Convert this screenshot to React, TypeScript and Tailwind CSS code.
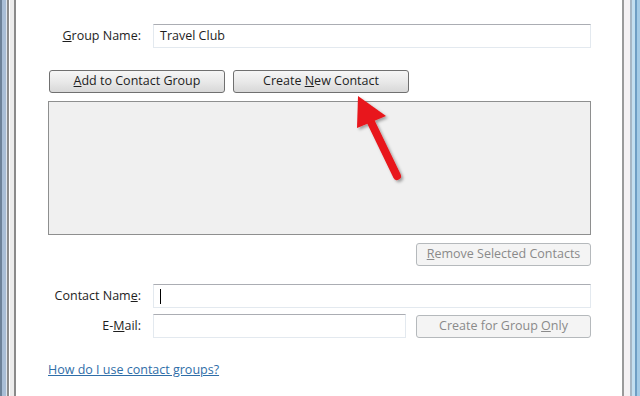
import React from 'react';

// Windows 7 style "Contact Group" dialog fragment, with a red annotation arrow.

const font = { fontFamily: '"Open Sans", "Noto Sans", sans-serif' };

function Input({ value, caret, className = '' }: { value?: string; caret?: boolean; className?: string }) {
  return (
    <div
      className={`h-[24px] flex items-center px-[6px] bg-white border border-[#e3e9ef] border-t-[#abadb3] text-[12.5px] text-[#1e1e1e] ${className}`}
    >
      {value}
      {caret && <span className="w-px h-[15px] bg-black" />}
    </div>
  );
}

function Button({ children, disabled, className = '' }: { children: React.ReactNode; disabled?: boolean; className?: string }) {
  return (
    <button
      type="button"
      className={
        disabled
          ? `h-[23px] shrink-0 flex items-center justify-center rounded-[3px] border border-[#b5b9bc] bg-[#f4f4f4] text-[12.5px] text-[#8a8a8a] ${className}`
          : `h-[23px] shrink-0 flex items-center justify-center rounded-[3px] border border-[#707070] bg-gradient-to-b from-[#f6f6f6] via-[#e9e9e9] to-[#d8d8d8] text-[12.5px] text-[#1e1e1e] ${className}`
      }
    >
      <span>{children}</span>
    </button>
  );
}

function Label({ children }: { children: React.ReactNode }) {
  return <div className="w-[94px] shrink-0 text-right text-[12.5px] text-[#1e1e1e] pr-px">{children}</div>;
}

export default function App() {
  return (
    <div className="w-[640px] h-[396px] flex overflow-hidden bg-white" style={font}>
      {/* left window frame */}
      <div className="w-[16px] flex shrink-0">
        <div className="w-[2px] bg-[#6d8299]" />
        <div className="w-[4px] bg-[#a9bed6]" />
        <div className="w-[1px] bg-[#dfe6ee]" />
        <div className="w-[2px] bg-[#8c8c8c]" />
        <div className="w-[1px] bg-white" />
        <div className="w-[4px] bg-[#ececec]" />
        <div className="w-[2px] bg-[#8a8a8a]" />
      </div>

      {/* dialog content */}
      <div className="relative w-[606px] shrink-0 flex flex-col pt-[24px] pl-[32px] pr-[31px]">
        <div className="flex items-center gap-[11px]">
          <Label>
            <span className="underline">G</span>roup Name:
          </Label>
          <Input value="Travel Club" className="flex-1" />
        </div>

        <div className="flex gap-[8px] mt-[22px] pl-px">
          <Button className="w-[176px]">
            <span className="underline">A</span>dd to Contact Group
          </Button>
          <Button className="w-[176px]">
            Create <span className="underline">N</span>ew Contact
          </Button>
        </div>

        <div className="mt-[8px] h-[134px] bg-[#f0f0f0] border border-[#8e8f8f]" />

        <div className="flex justify-end mt-[8px]">
          <Button disabled className="w-[175px]">
            <span className="underline">R</span>emove Selected Contacts
          </Button>
        </div>

        <div className="flex items-center gap-[11px] mt-[18px]">
          <Label>
            Contact Nam<span className="underline">e</span>:
          </Label>
          <Input caret className="flex-1 border-[#abadb3] border-t-[#7a7d82]" />
        </div>

        <div className="flex items-center mt-[6px]">
          <Label>
            E-<span className="underline">M</span>ail:
          </Label>
          <Input className="w-[253px] shrink-0 ml-[11px]" />
          <div className="flex-1 flex justify-end">
            <Button disabled className="w-[175px]">
              Create for Group <span className="underline">O</span>nly
            </Button>
          </div>
        </div>

        <div className="mt-[18px]">
          <span className="text-[12.5px] text-[#2f6ea8] underline">How do I use contact groups?</span>
        </div>

        {/* annotation arrow */}
        <svg className="absolute left-0 top-0" width="606" height="396" viewBox="0 0 606 396">
          <defs>
            <filter id="sh" x="-50%" y="-50%" width="200%" height="200%">
              <feDropShadow dx="2" dy="2" stdDeviation="1.5" floodColor="#000" floodOpacity="0.35" />
            </filter>
          </defs>
          <g filter="url(#sh)" transform="translate(-16 0)">
            <line x1="397" y1="176" x2="369" y2="118" stroke="#e8141a" strokeWidth="8" strokeLinecap="round" />
            <polygon points="358,96 357,128 386,116" fill="#e8141a" />
          </g>
        </svg>
      </div>

      {/* right window frame */}
      <div className="w-[18px] flex shrink-0">
        <div className="w-[2px] bg-[#9a9a9a]" />
        <div className="w-[6px] bg-[#f4f1f3]" />
        <div className="w-[2px] bg-[#a7b7c5]" />
        <div className="w-[3px] bg-[#c3dff0]" />
        <div className="w-[2px] bg-[#6e9ec4]" />
        <div className="w-[3px] bg-[#a4cbe6]" />
      </div>
    </div>
  );
}
